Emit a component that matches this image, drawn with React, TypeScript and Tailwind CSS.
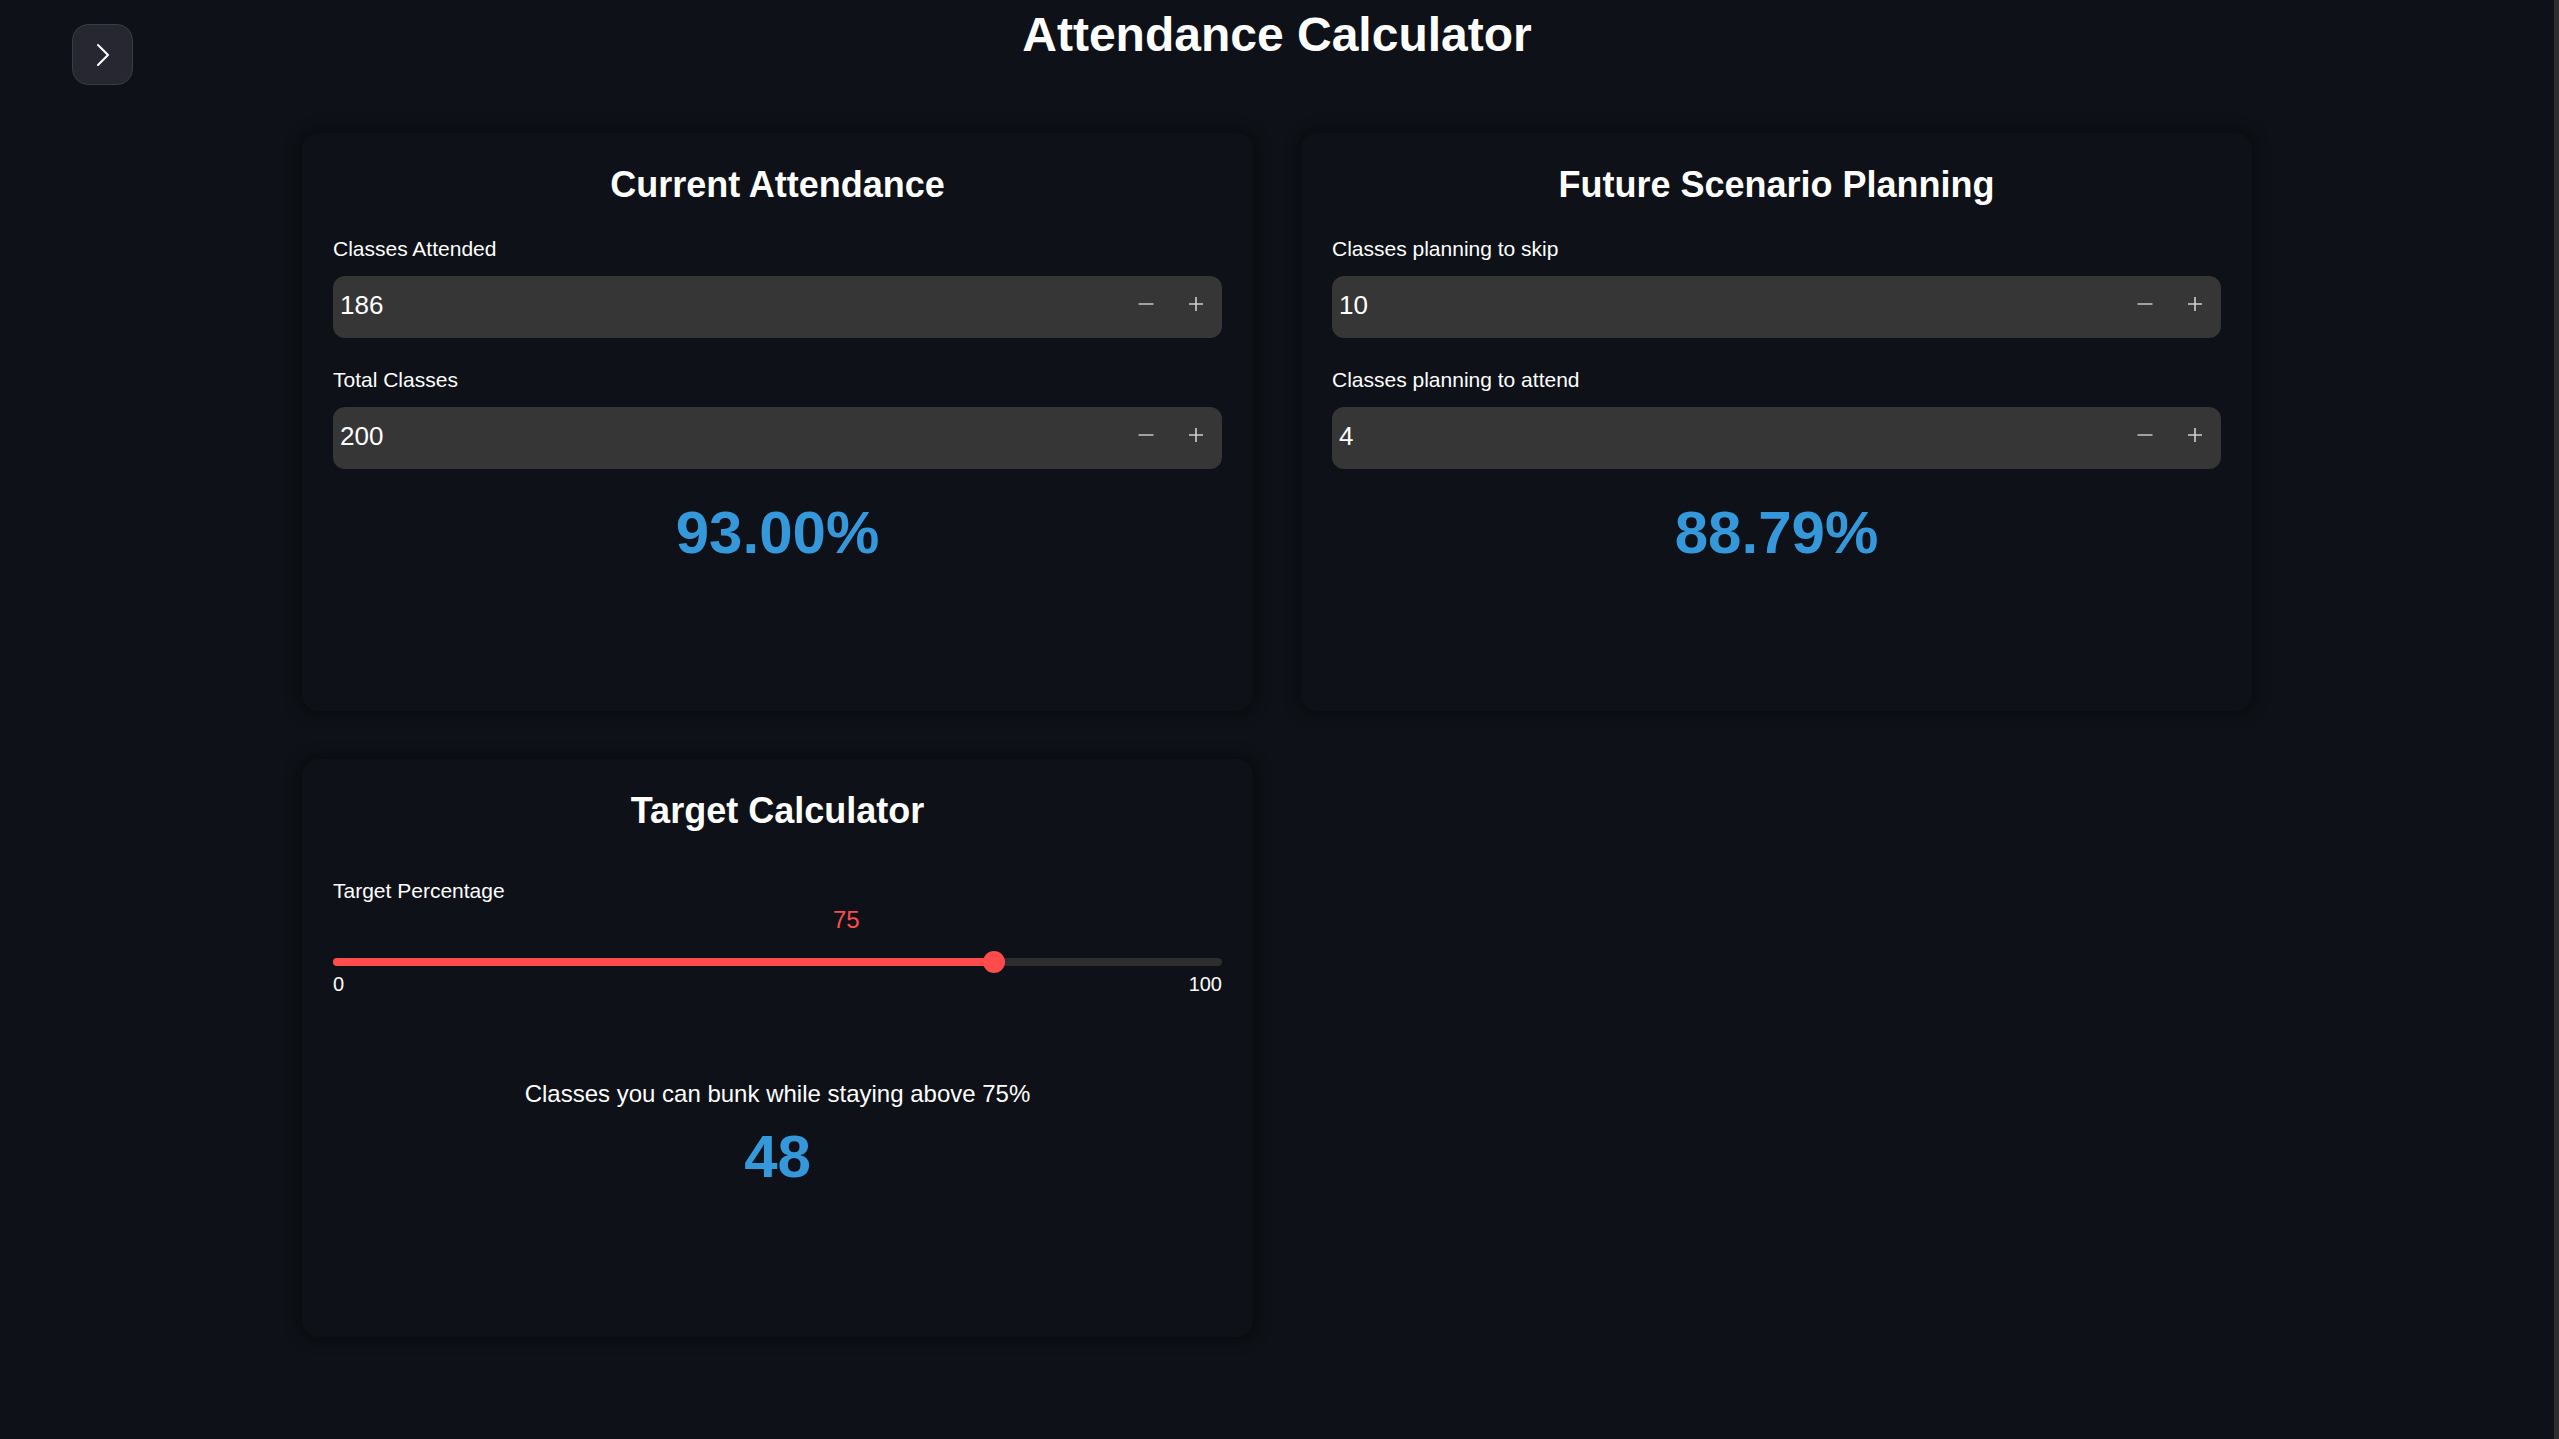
import React from "react";

const font = { fontFamily: '"Liberation Sans", Arial, sans-serif' };

const NumberField: React.FC<{ label: string; value: number; first?: boolean }> = ({
  label,
  value,
  first,
}) => (
  <div className={first ? "mt-[30px]" : "mt-[28px]"}>
    <label className="block text-[21px] leading-7 text-white">{label}</label>
    <div className="mt-[13px] flex h-[62px] items-center rounded-xl bg-[#363636] pl-[7px] pr-[14px]">
      <span className="flex-1 pb-[4px] text-[26px] text-white">{value}</span>
      <button className="mb-[6px] flex h-6 w-6 items-center justify-center text-[#bdbdbd]">
        <svg width="24" height="24" viewBox="0 0 24 24" fill="none" stroke="currentColor" strokeWidth="1.6">
          <path d="M4.5 12h15" />
        </svg>
      </button>
      <button className="mb-[6px] ml-[26px] flex h-6 w-6 items-center justify-center text-[#d0d0d0]">
        <svg width="24" height="24" viewBox="0 0 24 24" fill="none" stroke="currentColor" strokeWidth="1.6">
          <path d="M5 12h14M12 5v14" />
        </svg>
      </button>
    </div>
  </div>
);

const Card: React.FC<{ title: string; children: React.ReactNode }> = ({ title, children }) => (
  <div className="h-[578px] rounded-2xl bg-[#0e1117] px-[31px] pt-8 shadow-[0_0_14px_4px_rgba(0,0,0,0.35)]">
    <h2 className="text-center text-4xl font-bold text-white">{title}</h2>
    {children}
  </div>
);

export default function App() {
  const attended = 186;
  const total = 200;
  const skip = 10;
  const attend = 4;
  const target = 75;

  const current = ((attended / total) * 100).toFixed(2);
  const future = (((attended + attend) / (total + skip + attend)) * 100).toFixed(2);
  const bunk = Math.floor(attended / (target / 100) - total);

  return (
    <div className="flex min-h-screen bg-[#0e1117]" style={font}>
      <main className="relative flex-1 pb-[100px] pt-[11px]">
        <button className="absolute left-[72px] top-[24px] flex h-[61px] w-[61px] items-center justify-center rounded-2xl border border-[#3b3b45] bg-[#262730] text-white">
          <svg width="40" height="40" viewBox="0 0 24 24" fill="none" stroke="currentColor" strokeWidth="1.25" strokeLinecap="round" strokeLinejoin="round">
            <path d="m9 18 6-6-6-6" />
          </svg>
        </button>

        <h1 className="text-center text-5xl font-bold text-white">Attendance Calculator</h1>

        <div className="mx-auto mt-[74px] grid max-w-[1950px] grid-cols-2 gap-12">
          <Card title="Current Attendance">
            <NumberField label="Classes Attended" value={attended} first />
            <NumberField label="Total Classes" value={total} />
            <p className="mt-[34px] text-center text-6xl font-bold text-[#3498db]">{current}%</p>
          </Card>

          <Card title="Future Scenario Planning">
            <NumberField label="Classes planning to skip" value={skip} first />
            <NumberField label="Classes planning to attend" value={attend} />
            <p className="mt-[34px] text-center text-6xl font-bold text-[#3498db]">{future}%</p>
          </Card>

          <Card title="Target Calculator">
            <label className="mt-[46px] block text-[21px] leading-7 text-white">Target Percentage</label>
            <div className="-mt-px ml-[500px] text-2xl text-[#ff4b4b]">{target}</div>
            <div className="relative mt-[22px] h-2 rounded-full bg-[#2e2e2e]">
              <div
                className="h-2 rounded-full bg-[#ff4b4b]"
                style={{ width: `calc(11px + ${target / 100} * (100% - 22px))` }}
              />
              <div
                className="absolute top-[-7px] h-[22px] w-[22px] rounded-full bg-[#ff4b4b]"
                style={{ left: `calc(${target / 100} * (100% - 22px))` }}
              />
            </div>
            <div className="mt-[4px] flex justify-between text-xl text-white">
              <span>0</span>
              <span>100</span>
            </div>
            <p className="mt-[80px] text-center text-2xl text-white">
              Classes you can bunk while staying above {target}%
            </p>
            <p className="mt-[17px] text-center text-6xl font-bold text-[#3498db]">{bunk}</p>
          </Card>
        </div>
      </main>
      <div className="w-[5px] bg-[#2e2e2e]" />
    </div>
  );
}
